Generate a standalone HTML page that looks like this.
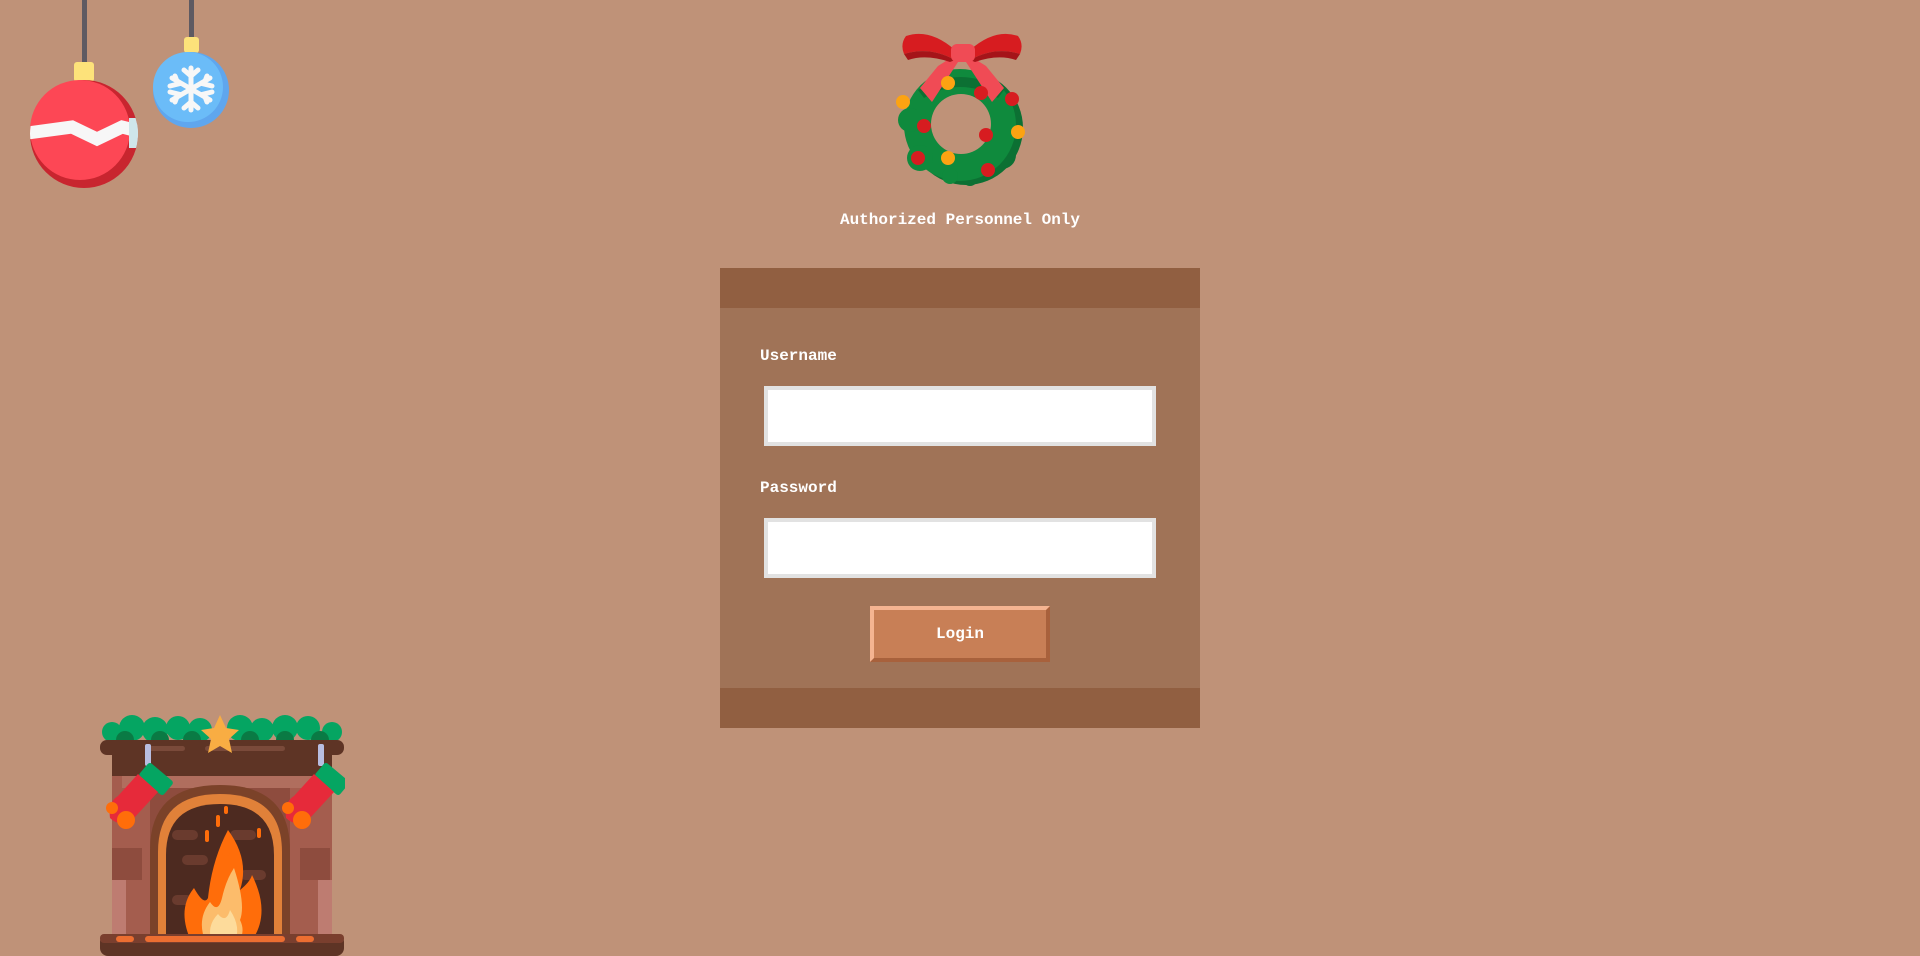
<!DOCTYPE html>
<html><head><meta charset="utf-8"><style>
html,body{margin:0;padding:0;width:1920px;height:956px;overflow:hidden;background:#bf9278;font-family:"Liberation Mono","DejaVu Sans Mono",monospace;}
.abs{position:absolute;}
.title{position:absolute;left:0;width:1920px;top:210px;text-align:center;color:#fff;font-weight:bold;font-size:16px;line-height:20px;}
.form{position:absolute;left:720px;top:268px;width:480px;height:460px;background:#a07357;}
.band{position:absolute;left:0;width:480px;height:40px;background:#915f41;}
.lbl{position:absolute;left:40px;color:#fff;font-weight:bold;font-size:16px;line-height:20px;}
.inp{position:absolute;left:44px;width:384px;height:52px;background:#fff;border:4px solid #e2e2e2;}
.btn{position:absolute;left:150px;top:338px;width:172px;height:48px;background:#c87f56;border-top:4px solid #f5b491;border-left:4px solid #f5b491;border-right:4px solid #a8613c;border-bottom:4px solid #a8613c;box-sizing:content-box;color:#fff;font-weight:bold;font-size:16px;text-align:center;line-height:48px;}
</style></head><body>

<!-- ornaments -->
<svg class="abs" style="left:0;top:0" width="260" height="200" viewBox="0 0 260 200">
  <rect x="82" y="0" width="5" height="64" fill="#5e5a62"/>
  <rect x="74" y="62" width="20" height="20" rx="3" fill="#fde27a"/>
  <circle cx="84" cy="134" r="54" fill="#c8252f"/>
  <circle cx="80" cy="130" r="50" fill="#fd4755"/>
  <clipPath id="bc"><circle cx="84" cy="134" r="54"/></clipPath>
  <polyline clip-path="url(#bc)" points="20,134 72,127 97,139 122,127 150,134" fill="none" stroke="#f7f7f7" stroke-width="13" stroke-linejoin="miter"/>
  <rect x="129" y="118" width="12" height="30" fill="#cfe6ea" clip-path="url(#bc)"/>
  <rect x="189" y="0" width="5" height="40" fill="#5e5a62"/>
  <rect x="184" y="37" width="15" height="16" rx="3" fill="#fde27a"/>
  <circle cx="191" cy="90" r="38" fill="#5fa6ee"/>
  <circle cx="188" cy="87" r="35" fill="#6bbcf8"/>
  <g stroke="#f7f7f7" stroke-width="5" stroke-linecap="round" fill="none">
    <line x1="191" y1="68" x2="191" y2="110"/>
    <line x1="172" y1="78" x2="210" y2="100"/>
    <line x1="172" y1="100" x2="210" y2="78"/>
    <path d="M184 70 L191 76 L198 70 M184 108 L191 102 L198 108"/>
    <path d="M170 86 L178 84 L175 76 M212 86 L204 84 L207 76"/>
    <path d="M170 92 L178 94 L175 102 M212 92 L204 94 L207 102"/>
  </g>
</svg>

<!-- wreath -->
<svg class="abs" style="left:890px;top:30px" width="150" height="160" viewBox="0 0 150 160">
  <g fill="#0c7033"><circle cx="76" cy="98" r="57"/><circle cx="118" cy="90" r="14"/><circle cx="112" cy="125" r="14"/><circle cx="80" cy="148" r="8"/></g>
  <g fill="#0f8a3d"><circle cx="70" cy="95" r="56"/><circle cx="20" cy="90" r="12"/><circle cx="30" cy="128" r="13"/><circle cx="60" cy="146" r="8"/></g>
  <circle cx="71" cy="94" r="30" fill="#bf9278"/>
  <path d="M28 60 Q70 34 114 60 L108 68 Q70 46 34 68 Z" fill="#0c7033"/>
  <path d="M64 26 L48 36 L30 58 L42 72 L68 32 Z" fill="#f04b55"/>
  <path d="M80 26 L96 36 L114 58 L102 72 L76 32 Z" fill="#f04b55"/>
  <path d="M65 20 Q40 -2 16 6 Q10 14 14 24 Q40 16 65 30 Z" fill="#d71c20"/>
  <path d="M80 20 Q105 -2 128 6 Q134 14 130 24 Q105 16 80 30 Z" fill="#d71c20"/>
  <path d="M14 24 Q40 16 65 30 L60 32 Q36 24 18 30 Z" fill="#a51419"/>
  <path d="M130 24 Q105 16 80 30 L85 32 Q108 24 126 30 Z" fill="#a51419"/>
  <rect x="61" y="14" width="24" height="18" rx="6" fill="#f04b55"/>
  <g fill="#fca312"><circle cx="58" cy="53" r="7"/><circle cx="13" cy="72" r="7"/><circle cx="128" cy="102" r="7"/><circle cx="58" cy="128" r="7"/></g>
  <g fill="#d71c20"><circle cx="91" cy="63" r="7"/><circle cx="122" cy="69" r="7"/><circle cx="34" cy="96" r="7"/><circle cx="96" cy="105" r="7"/><circle cx="28" cy="128" r="7"/><circle cx="98" cy="140" r="7"/></g>
</svg>

<div class="title">Authorized Personnel Only</div>

<div class="form">
  <div class="band" style="top:0"></div>
  <div class="lbl" style="top:78px">Username</div>
  <div class="inp" style="top:118px"></div>
  <div class="lbl" style="top:210px">Password</div>
  <div class="inp" style="top:250px"></div>
  <div class="btn">Login</div>
  <div class="band" style="top:420px"></div>
</div>

<!-- fireplace -->
<svg class="abs" style="left:100px;top:710px" width="245" height="246" viewBox="0 0 245 246">
  <g fill="#05a562"><circle cx="12" cy="22" r="10"/><circle cx="32" cy="18" r="13"/><circle cx="55" cy="20" r="13"/><circle cx="78" cy="18" r="12"/><circle cx="100" cy="20" r="12"/><circle cx="140" cy="18" r="13"/><circle cx="162" cy="20" r="12"/><circle cx="185" cy="18" r="13"/><circle cx="208" cy="18" r="12"/><circle cx="232" cy="22" r="10"/></g>
  <g fill="#0a7a44"><circle cx="25" cy="30" r="9"/><circle cx="60" cy="30" r="9"/><circle cx="92" cy="30" r="9"/><circle cx="150" cy="30" r="9"/><circle cx="185" cy="30" r="9"/><circle cx="220" cy="30" r="9"/></g>
  <rect x="12" y="42" width="220" height="190" fill="#a45d4e"/>
  <rect x="12" y="42" width="220" height="24" fill="#5e3425"/>
  <rect x="22" y="66" width="200" height="12" fill="#b06e5e"/>
  <rect x="50" y="78" width="140" height="60" fill="#8e4c3e"/>
  <rect x="12" y="138" width="30" height="32" fill="#8e4c3e"/>
  <rect x="200" y="138" width="30" height="32" fill="#8e4c3e"/>
  <rect x="12" y="170" width="14" height="60" fill="#c98a80" opacity=".7"/>
  <rect x="218" y="170" width="14" height="60" fill="#c98a80" opacity=".7"/>
  <rect x="0" y="30" width="244" height="15" rx="7" fill="#5e3425"/>
  <rect x="45" y="36" width="40" height="5" rx="2.5" fill="#7a4a3a"/><rect x="105" y="36" width="80" height="5" rx="2.5" fill="#7a4a3a"/>
  <path d="M50 233 L50 140 Q50 75 120 75 Q190 75 190 140 L190 233 Z" fill="#7b4229"/>
  <path d="M58 233 L58 142 Q58 84 120 84 Q182 84 182 142 L182 233 Z" fill="#f38c3c" opacity=".85"/>
  <path d="M66 233 L66 145 Q66 94 120 94 Q174 94 174 145 L174 233 Z" fill="#4d2a20"/>
  <g fill="#6a3b2e"><rect x="72" y="120" width="26" height="10" rx="5"/><rect x="130" y="120" width="26" height="10" rx="5"/><rect x="82" y="145" width="26" height="10" rx="5"/><rect x="140" y="160" width="26" height="10" rx="5"/><rect x="72" y="185" width="20" height="10" rx="5"/></g>
  <path d="M92 233 Q76 200 94 178 Q104 196 108 188 Q112 150 128 120 Q150 150 140 180 Q150 172 152 165 Q172 205 150 233 Z" fill="#ff6d0a"/>
  <path d="M106 233 Q96 210 110 192 Q118 204 122 188 Q126 170 134 158 Q146 195 140 210 Q146 222 138 233 Z" fill="#fcbc6b"/>
  <path d="M112 233 Q106 216 118 204 Q126 214 130 200 Q142 218 134 233 Z" fill="#fddb9b"/>
  <g fill="#ff6d0a"><rect x="122" y="130" width="8" height="16" rx="4"/><rect x="116" y="105" width="4" height="12" rx="2"/><rect x="157" y="118" width="4" height="10" rx="2"/><rect x="105" y="120" width="4" height="12" rx="2"/><rect x="124" y="96" width="4" height="8" rx="2"/></g>
  <rect x="0" y="224" width="244" height="22" rx="8" fill="#5e3425"/>
  <rect x="0" y="224" width="244" height="9" rx="4" fill="#7a3f2e"/>
  <rect x="45" y="226" width="140" height="6" rx="3" fill="#ec6e31"/><rect x="16" y="226" width="18" height="6" rx="3" fill="#ec6e31"/><rect x="196" y="226" width="18" height="6" rx="3" fill="#ec6e31"/>
  <path d="M120 5 L126 18 L139 20 L129 29 L132 43 L120 36 L108 43 L111 29 L101 20 L114 18 Z" fill="#f8ad43"/>
  <rect x="45" y="34" width="6" height="22" rx="2" fill="#b8bde0"/><rect x="218" y="34" width="6" height="22" rx="2" fill="#b8bde0"/>
  <g>
    <rect x="40" y="60" width="32" height="18" rx="3" fill="#05a562" transform="rotate(40 56 69)"/>
    <path d="M38 64 L58 82 L34 108 Q20 118 10 108 Q8 92 18 86 Z" fill="#e62a3a"/>
    <circle cx="26" cy="110" r="9" fill="#ff6d0a"/><circle cx="12" cy="98" r="6" fill="#ff6d0a"/>
    <rect x="216" y="60" width="32" height="18" rx="3" fill="#05a562" transform="rotate(40 232 69)"/>
    <path d="M214 64 L234 82 L210 108 Q196 118 186 108 Q184 92 194 86 Z" fill="#e62a3a"/>
    <circle cx="202" cy="110" r="9" fill="#ff6d0a"/><circle cx="188" cy="98" r="6" fill="#ff6d0a"/>
  </g>
</svg>

</body></html>
